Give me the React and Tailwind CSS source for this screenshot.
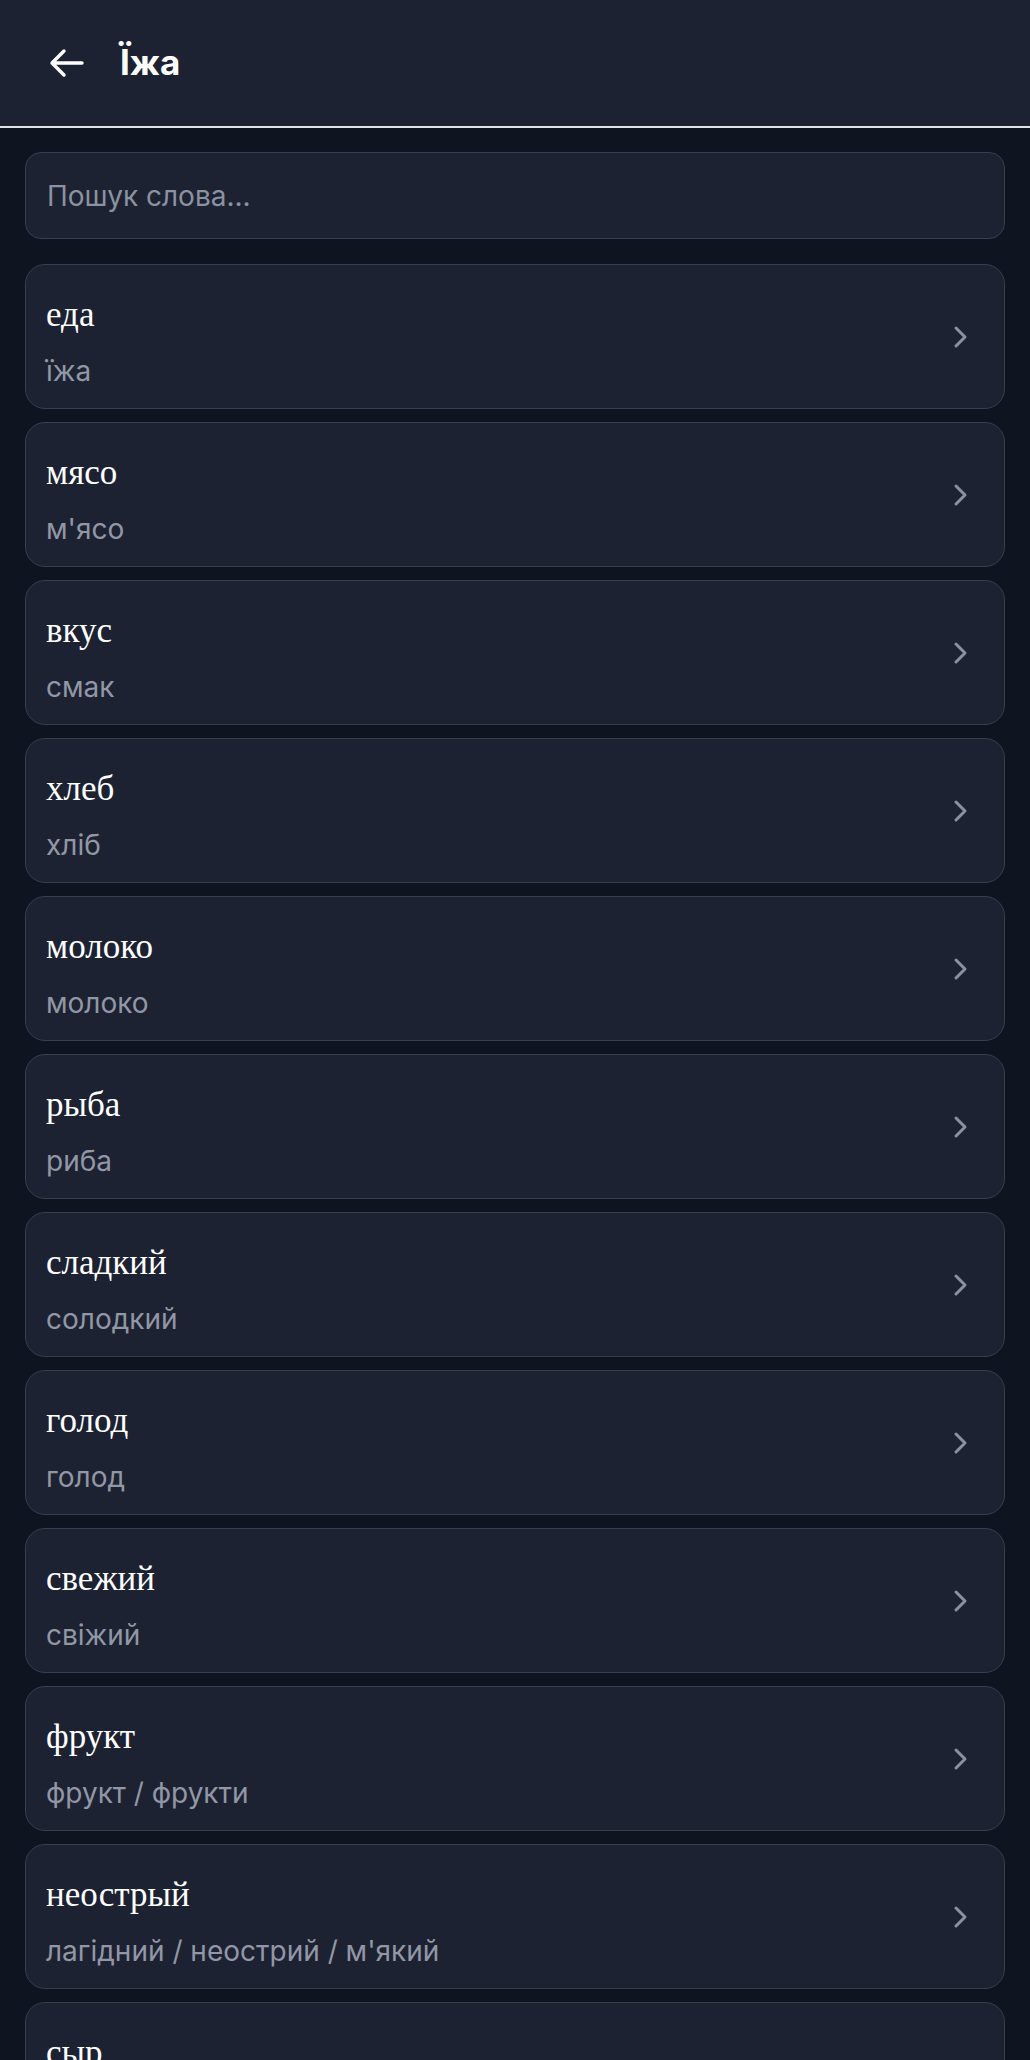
import { useState } from 'react';

const words = [
  { word: 'еда', tr: 'їжа' },
  { word: 'мясо', tr: "м'ясо" },
  { word: 'вкус', tr: 'смак' },
  { word: 'хлеб', tr: 'хліб' },
  { word: 'молоко', tr: 'молоко' },
  { word: 'рыба', tr: 'риба' },
  { word: 'сладкий', tr: 'солодкий' },
  { word: 'голод', tr: 'голод' },
  { word: 'свежий', tr: 'свіжий' },
  { word: 'фрукт', tr: 'фрукт / фрукти' },
  { word: 'неострый', tr: "лагідний / неострий / м'який" },
  { word: 'сыр', tr: 'сир' },
  { word: 'овощ', tr: 'овоч' },
];

const sans = "font-['Inter','Noto_Sans',sans-serif]";

function WordCard({ word, tr }) {
  return (
    <button className="w-full flex items-center justify-between text-left bg-[#1d2232] border border-[#373e4c] rounded-[20px] pl-[20px] pr-[21px] pt-[29px] pb-[19px]">
      <div className="flex flex-col">
        <span className="font-['Liberation_Serif','Times_New_Roman',serif] text-[35px] leading-[42px] text-white">
          {word}
        </span>
        <span className={`${sans} mt-[17px] text-[28px] leading-[36px] text-[#9197a5]`}>{tr}</span>
      </div>
      <svg width="16" height="24" viewBox="0 0 16 24" fill="none" className="shrink-0 mr-[14px] -mt-[10px]">
        <path d="M3 3 L12 12 L3 21" stroke="#8a92a2" strokeWidth="3" strokeLinecap="round" strokeLinejoin="round" />
      </svg>
    </button>
  );
}

export default function App() {
  const [query, setQuery] = useState('');
  const list = words.filter(
    (w) => w.word.includes(query.toLowerCase()) || w.tr.includes(query.toLowerCase())
  );

  return (
    <div className={`min-h-screen bg-[#0f1421] ${sans}`}>
      {/* Header */}
      <header className="h-[128px] bg-[#1d2232] border-b-2 border-[#e2e3e6] flex items-center pl-[49px]">
        <button aria-label="Назад" className="flex items-center">
          <svg width="36" height="30" viewBox="0 0 36 30" fill="none">
            <path d="M3 15 H33 M15 3 L3 15 L15 27" stroke="white" strokeWidth="3.4" strokeLinecap="round" strokeLinejoin="round" />
          </svg>
        </button>
        <h1 className="ml-[35px] text-[35px] font-bold text-white leading-none -mt-[2px]">Їжа</h1>
      </header>

      <main className="px-[25px] pt-[24px]">
        <input
          value={query}
          onChange={(e) => setQuery(e.target.value)}
          placeholder="Пошук слова..."
          className="w-full h-[87px] bg-[#1d2232] border border-[#373e4c] rounded-[16px] px-[21px] text-[28px] text-white placeholder:text-[#8b92a0] outline-none"
        />

        <div className="mt-[25px] flex flex-col gap-[13px] pb-6">
          {list.map((w) => (
            <WordCard key={w.word} word={w.word} tr={w.tr} />
          ))}
        </div>
      </main>
    </div>
  );
}
